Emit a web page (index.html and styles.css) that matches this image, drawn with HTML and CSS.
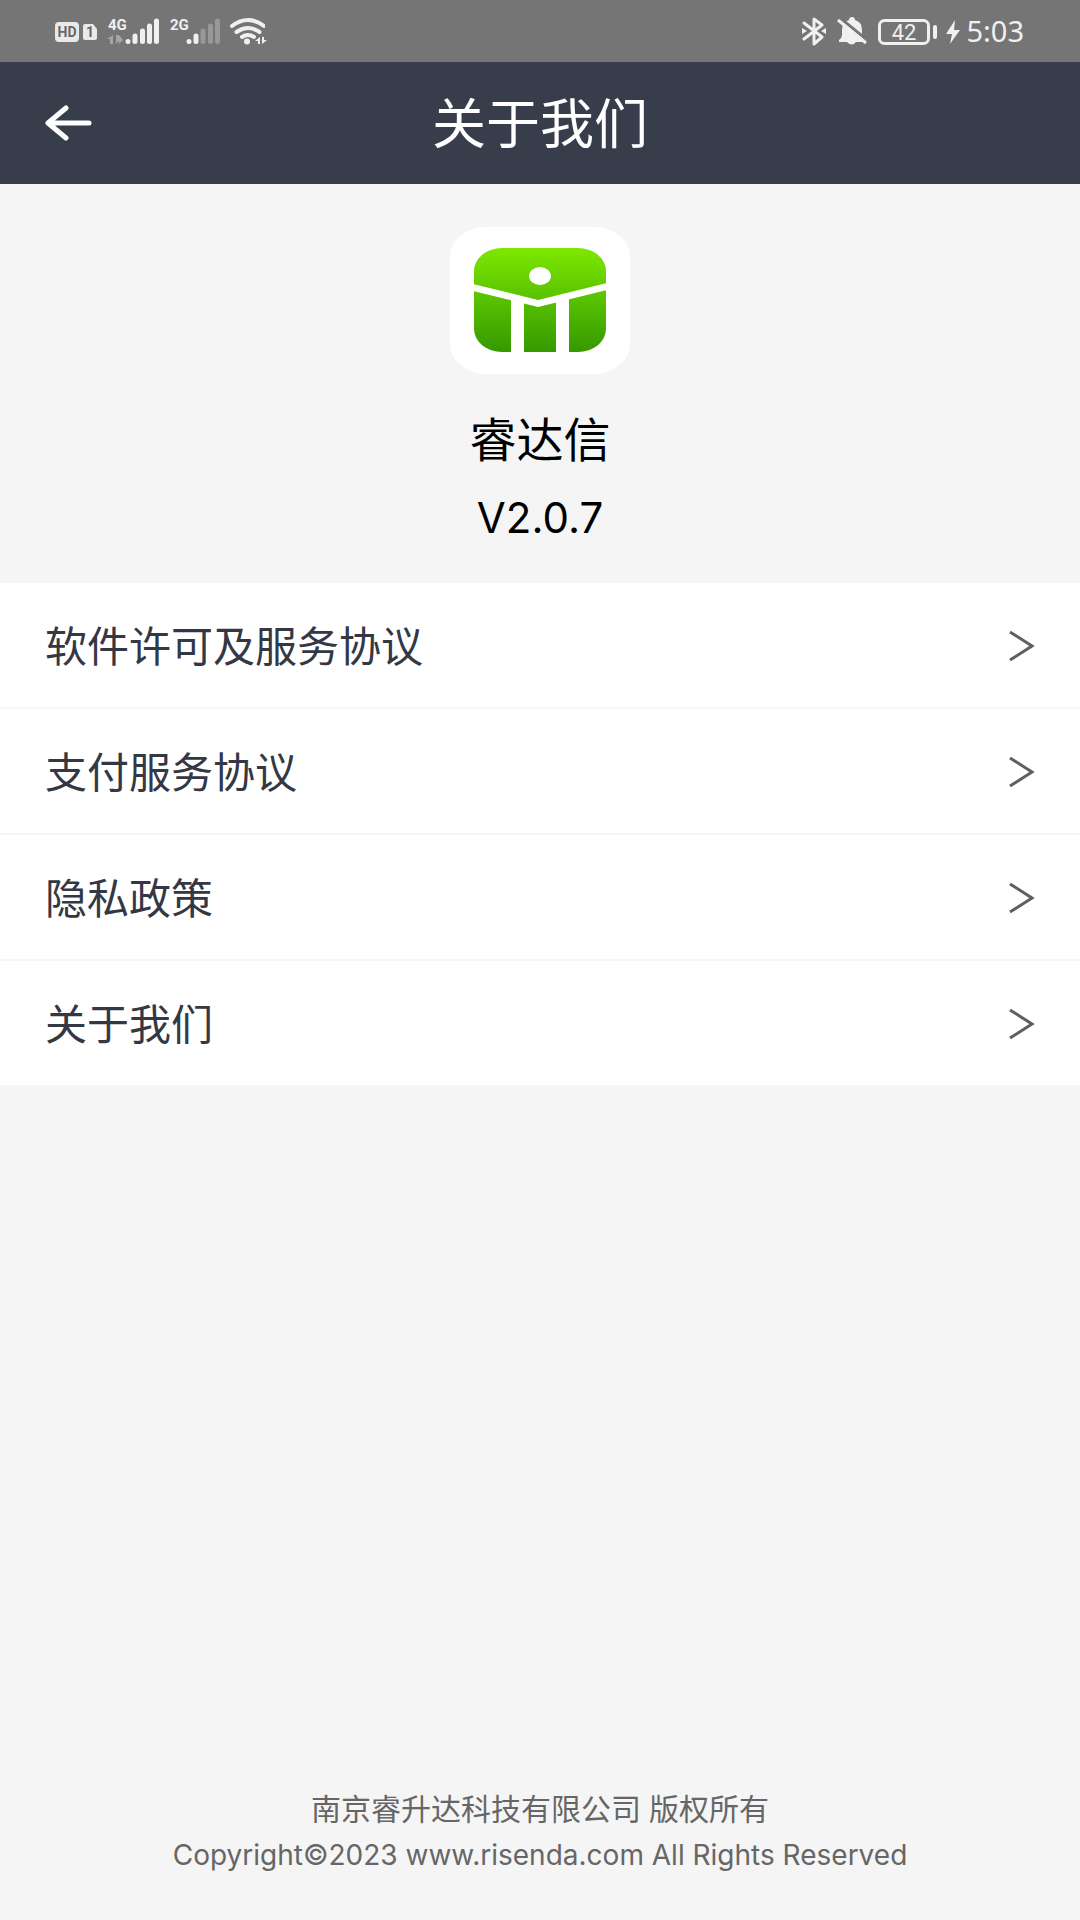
FILE: index.html
```html
<!DOCTYPE html>
<html lang="zh-CN">
<head>
<meta charset="utf-8">
<meta name="viewport" content="width=device-width, initial-scale=1">
<title>关于我们</title>
<link rel="stylesheet" href="styles.css">
</head>
<body>
<div class="page">
  <div class="status">
    <div class="status-group">
      <svg class="status-icon" width="210" height="61" viewBox="0 0 210 61" role="img" aria-label="HD 1, 4G, 2G, Wi-Fi">
        <rect x="0" y="21" width="24" height="20" rx="4" fill="#e9e9e9"/>
        <text class="tag" x="12" y="36" text-anchor="middle">HD</text>
        <path d="M30 23h8l4 5v9q0 2-2 2H30q-2 0-2-2V25q0-2 2-2z" fill="#e9e9e9"/>
        <text class="tag" x="35" y="36" text-anchor="middle">1</text>
        <text class="net" x="53" y="29">4G</text>
        <path d="M58 34v9h-3v-5h-3zM61 34v9l3-3v-6zM64 34l4 5-4 4z" fill="#a5a5a5"/>
        <g stroke="#f0f0f0" stroke-width="5" stroke-linecap="round">
          <path d="M73 40.500v0M80 35v5.500M87.500 30v10.500M94.500 25v15.500M101.500 20v20.500"/>
          <path d="M134 40.500v0M141 35v5.500"/>
        </g>
        <path d="M148 30v10.500M155.500 25v15.500M162.500 20v20.500" stroke="#989898" stroke-width="5" stroke-linecap="round"/>
        <text class="net" x="115" y="29">2G</text>
        <path d="M177 25q16-12 32 0M181.500 31q11.500-8 23 0M187 36q6-4 12 0" fill="none" stroke="#f0f0f0" stroke-width="4" stroke-linecap="round"/>
        <circle cx="192" cy="40.500" r="3" fill="#f0f0f0"/>
      </svg>
      <svg class="arrows" width="12" height="61" viewBox="0 0 12 61" aria-hidden="true"><path d="M5 36v7H3v-3H0zM7 36v7l5-4H9v-3z" fill="#f0f0f0"/></svg>
    </div>
    <div class="status-group">
      <svg width="24" height="61" viewBox="0 0 24 61" role="img" aria-label="蓝牙">
        <path d="M2 22l18 14-8 7V18l8 6L2 38" fill="none" stroke="#f0f0f0" stroke-width="3" stroke-linejoin="round" stroke-linecap="round"/>
        <path d="M0 27l5 3-5 3zM24 27l-5 3 5 3z" fill="#f0f0f0"/>
      </svg>
      <svg class="bell" width="30" height="61" viewBox="0 0 30 61" role="img" aria-label="静音">
        <path d="M2 41v-2q3-2 3-5v-5q0-8 7-10a3 3 0 0 1 6 0q7 2 7 10v5q0 3 3 5v2zM10 41h9q-4 5-9 0z" fill="#f0f0f0"/>
        <path d="M3 17l27 22" stroke="#757575" stroke-width="3"/>
        <path d="M1 19l28 23" stroke="#f0f0f0" stroke-width="3"/>
      </svg>
      <svg class="battery" width="60" height="61" viewBox="0 0 60 61" role="img" aria-label="电量 42">
        <rect x="1.500" y="19.500" width="49" height="23" rx="5" fill="none" stroke="#f0f0f0" stroke-width="3"/>
        <rect x="55" y="24" width="4" height="14" rx="2" fill="#f0f0f0"/>
        <text class="level" x="26" y="39" text-anchor="middle">42</text>
      </svg>
      <svg class="bolt" width="14" height="61" viewBox="0 0 14 61" aria-hidden="true"><path d="M9 19L0 33h6L4 43l10-14H8z" fill="#f0f0f0"/></svg>
      <span class="clock">5:03</span>
    </div>
  </div>

  <header class="bar">
    <button class="back" type="button" aria-label="返回">
      <svg width="48" height="36" viewBox="0 0 48 36" aria-hidden="true"><path d="M44 18H3M21 3L3 18l18 15" fill="none" stroke="#fff" stroke-width="5" stroke-linecap="round" stroke-linejoin="round"/></svg>
    </button>
    <h1 class="title">关于我们</h1>
  </header>

  <main class="content">
    <section class="hero">
      <svg class="logo" width="180" height="148" viewBox="0 0 180 148" role="img" aria-label="睿达信">
        <defs><linearGradient id="leaf" gradientUnits="userSpaceOnUse" x1="0" y1="21" x2="0" y2="125"><stop offset="0" stop-color="#7fe800"/><stop offset=".5" stop-color="#57c100"/><stop offset="1" stop-color="#369800"/></linearGradient></defs>
        <rect width="180" height="147" rx="36" ry="30" fill="#fff"/>
        <rect x="24" y="21" width="132" height="104" rx="28" ry="23" fill="url(#leaf)"/>
        <g fill="#fff">
          <ellipse cx="90" cy="49" rx="11" ry="9"/>
          <path d="M23 57l65 16 69-17v7l-69 17-65-16z"/>
          <path d="M61 70h13v56H61zM106 70h13v56h-13z"/>
        </g>
      </svg>
      <p class="name">睿达信</p>
      <p class="version">V2.0.7</p>
    </section>

    <nav class="list">
      <a class="row" href="#license">软件许可及服务协议<svg width="26" height="32" viewBox="0 0 26 32" aria-hidden="true"><path d="M1 2l22 14L1 30"/></svg></a>
      <a class="row" href="#payment">支付服务协议<svg width="26" height="32" viewBox="0 0 26 32" aria-hidden="true"><path d="M1 2l22 14L1 30"/></svg></a>
      <a class="row" href="#privacy">隐私政策<svg width="26" height="32" viewBox="0 0 26 32" aria-hidden="true"><path d="M1 2l22 14L1 30"/></svg></a>
      <a class="row" href="#about">关于我们<svg width="26" height="32" viewBox="0 0 26 32" aria-hidden="true"><path d="M1 2l22 14L1 30"/></svg></a>
    </nav>
  </main>

  <footer class="footer">
    <p class="owner">南京睿升达科技有限公司 版权所有</p>
    <p class="copyright">Copyright©2023 www.risenda.com All Rights Reserved</p>
  </footer>
</div>
</body>
</html>
```
FILE: styles.css
```css
* {
  box-sizing: border-box;
}

body,
h1,
p {
  margin: 0;
}

body {
  background: #f5f5f5;
  color: #000;
  font-family: "Noto Sans", "Noto Sans CJK SC", sans-serif;
}

svg {
  display: block;
  flex: none;
}

.page {
  display: flex;
  flex-direction: column;
  min-height: 100vh;
}

.status {
  display: flex;
  justify-content: space-between;
  height: 62px;
  padding: 0 56px 0 55px;
  background: #757575;
  color: #f0f0f0;
}

.status-group {
  display: flex;
  align-items: center;
}

.tag {
  fill: #666;
  font: 700 14px Roboto, sans-serif;
}

.net {
  fill: #f0f0f0;
  font: 700 15px Roboto, sans-serif;
}

.level {
  fill: #f0f0f0;
  font: 400 22px Roboto, sans-serif;
}

.arrows {
  margin-left: -10px;
}

.bell,
.battery {
  margin-left: 11px;
}

.bolt {
  margin-left: 8px;
}

.clock {
  margin-left: 6px;
  font-size: 29px;
  line-height: 62px;
}

.bar {
  display: grid;
  grid-template-columns: 1fr auto 1fr;
  align-items: center;
  height: 122px;
  padding: 0 45px;
  background: #383d4b;
  color: #fff;
}

.back {
  justify-self: start;
  padding: 0;
  border: 0;
  background: none;
}

.title {
  font-size: 54px;
  font-weight: 400;
  line-height: 72px;
}

.hero {
  display: flex;
  flex-direction: column;
  align-items: center;
  padding: 43px 45px 33px;
}

.name {
  margin-top: 32px;
  font-size: 47px;
  line-height: 64px;
}

.version {
  margin-top: 15px;
  font-family: Inter, sans-serif;
  font-size: 42px;
  line-height: 64px;
}

.row {
  display: flex;
  align-items: center;
  justify-content: space-between;
  padding: 33px 45px 31px;
  background: #fff;
  color: #343844;
  font-size: 42px;
  line-height: 60px;
  text-decoration: none;
}

.row + .row {
  border-top: 2px solid #f5f5f5;
}

.row path {
  fill: none;
  stroke: #5f5f5f;
  stroke-width: 3;
}

.footer {
  margin-top: auto;
  padding: 0 45px 42px;
  color: #666;
  text-align: center;
}

.owner {
  font-size: 30px;
  line-height: 46px;
}

.copyright {
  font-family: Inter, sans-serif;
  font-size: 28px;
  line-height: 46px;
}
```
